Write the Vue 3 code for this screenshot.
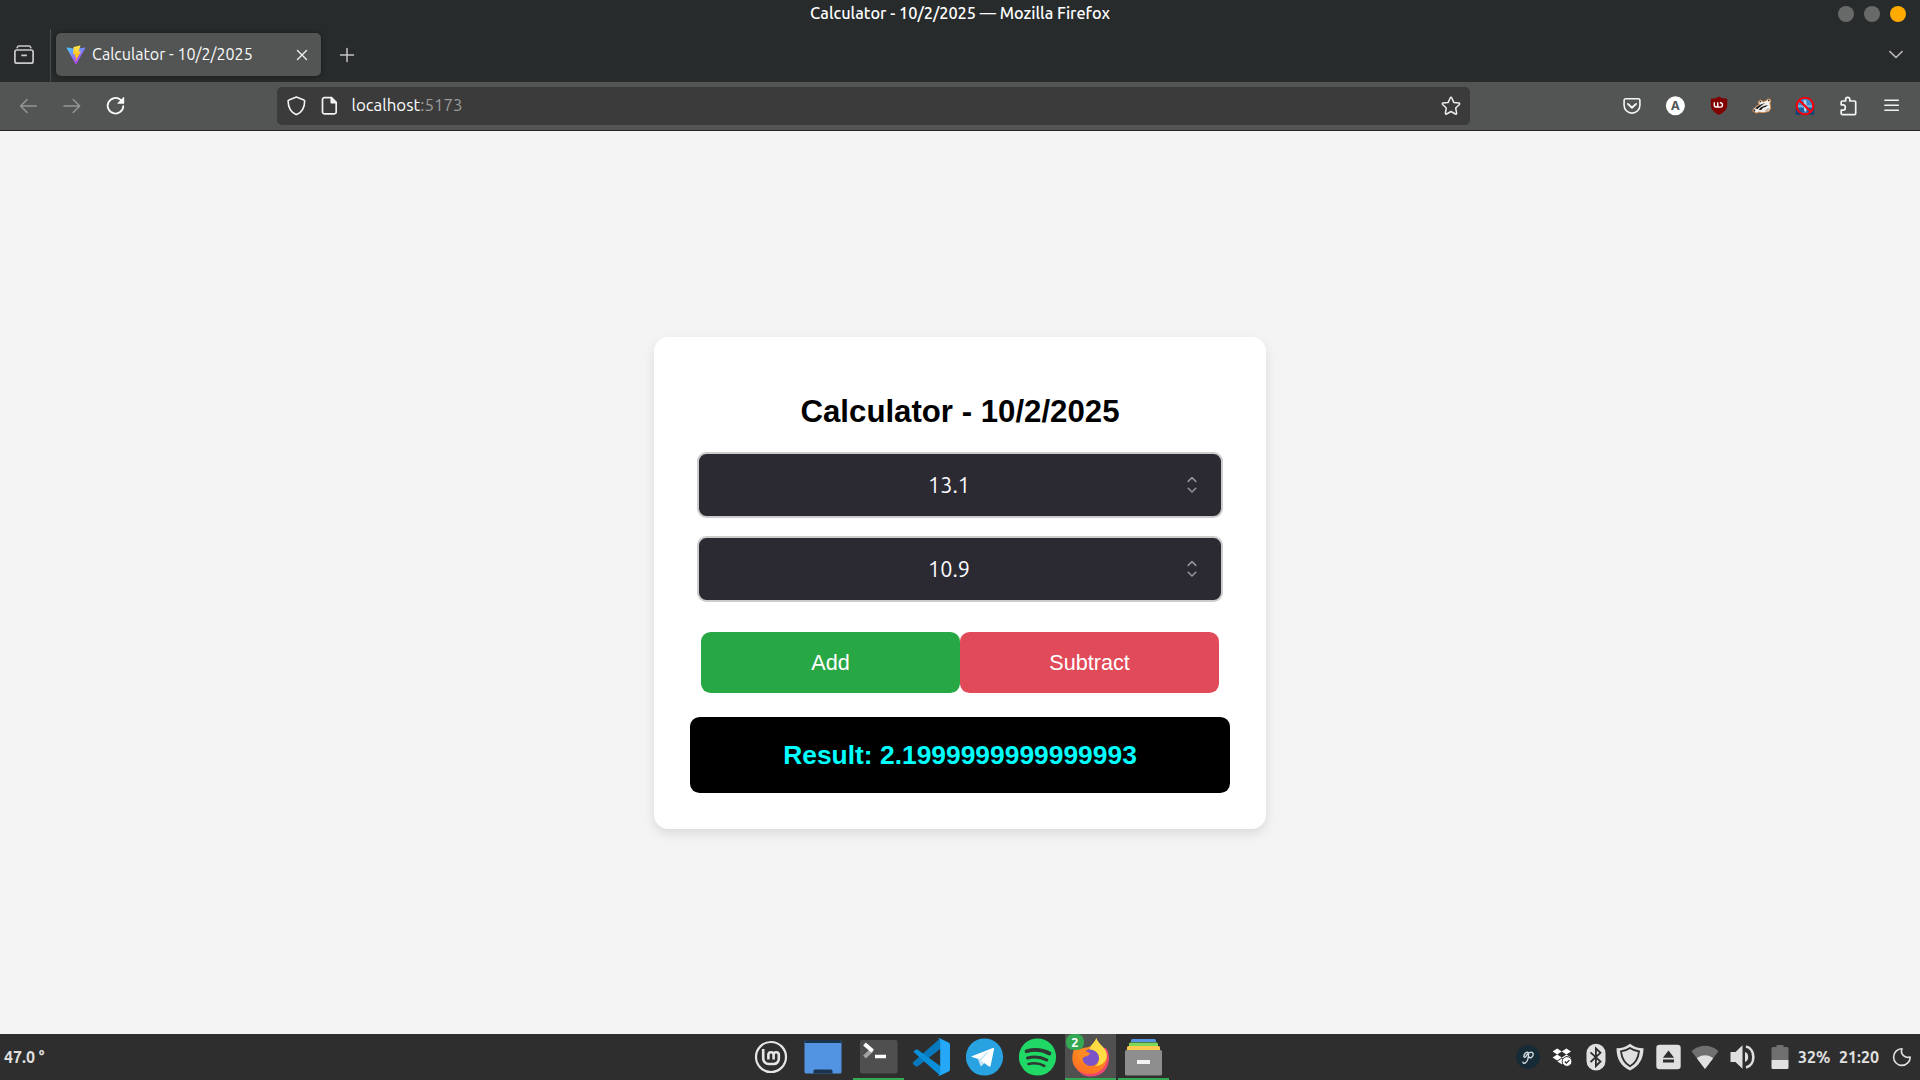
<script setup>
import { ref } from 'vue'

const title = 'Calculator - 10/2/2025'
const first = ref('13.1')
const second = ref('10.9')
const result = ref('2.1999999999999993')
</script>

<template>
  <div class="desktop">
    <header class="titlebar">
      <span class="window-title">{{ title }} — Mozilla Firefox</span>
      <div class="window-buttons"><i></i><i></i><i class="close"></i></div>
    </header>

    <div class="tabstrip">
      <svg class="view-icon" width="22" height="22" viewBox="0 0 22 22" fill="none" stroke="#c9caca" stroke-width="1.7" stroke-linecap="round">
        <path d="M4.2 3.6C4.5 2.4 5 2 6 2h10c1 0 1.500.4 1.800 1.600" />
        <rect x="1.900" y="6" width="18.200" height="13.200" rx="2" />
        <path d="M9 11.400h4.200" />
      </svg>
      <span class="divider"></span>
      <div class="tab">
        <svg width="20" height="20" viewBox="0 0 20 20">
          <defs>
            <linearGradient id="vite-a" x1="0" y1="0" x2=".6" y2="1"><stop offset="0" stop-color="#41d1ff" /><stop offset="1" stop-color="#bd34fe" /></linearGradient>
            <linearGradient id="vite-b" x1="0" y1="0" x2="0" y2="1"><stop offset="0" stop-color="#ffea50" /><stop offset="1" stop-color="#ffa800" /></linearGradient>
          </defs>
          <path fill="url(#vite-a)" d="M19.300 3.100 10.400 18.900a.5.5 0 0 1-.9 0L.6 3.100c-.2-.4.1-.8.600-.7l8.900 1.500 8.600-1.500c.5-.1.800.3.600.7Z" />
          <path fill="url(#vite-b)" d="m14.200.6-6.600 1.300-.5 7.200c0 .2.200.3.400.3l1.800-.4-.6 2.800c0 .2.200.4.400.3l1.100-.3-.8 4.100c0 .3.300.4.500.2l4.800-9.500c.1-.2-.1-.4-.3-.4l-1.900.4 1.900-5.600c0-.2 0-.4-.2-.4Z" />
        </svg>
        <span class="tab-title">{{ title }}</span>
        <svg width="12" height="12" viewBox="0 0 12 12" fill="none" stroke="#f0f0f0" stroke-width="1.400" stroke-linecap="round"><path d="m1.500 1.500 9 9m0-9-9 9" /></svg>
      </div>
      <svg class="new-tab" width="16" height="16" viewBox="0 0 16 16" fill="none" stroke="#c4c5c5" stroke-width="1.500" stroke-linecap="round"><path d="M8 1.500v13M1.500 8h13" /></svg>
      <svg class="all-tabs" width="16" height="10" viewBox="0 0 16 10" fill="none" stroke="#c0c1c1" stroke-width="1.500" stroke-linecap="round" stroke-linejoin="round"><path d="m1.800 1.500 6.200 6 6.200-6" /></svg>
    </div>

    <div class="toolbar">
      <div class="nav">
        <svg width="20" height="20" viewBox="0 0 20 20" fill="none" stroke="#949695" stroke-width="1.500" stroke-linecap="round" stroke-linejoin="round"><path d="M18.300 10H2.800M9.100 3.500 2.600 10l6.500 6.500" /></svg>
        <svg width="20" height="20" viewBox="0 0 20 20" fill="none" stroke="#949695" stroke-width="1.500" stroke-linecap="round" stroke-linejoin="round"><path d="M2 10h15.500M11.200 3.500l6.500 6.500-6.500 6.500" /></svg>
        <svg width="20" height="20" viewBox="0 0 20 20" fill="none" stroke="#fbfbfb" stroke-width="1.800" stroke-linecap="round"><path d="M17.300 10.200a7.800 7.800 0 1 1-2.600-6.300l1.500 1.500" /><path fill="#fbfbfb" stroke="none" d="M18.200 1.600v5.700c0 .3-.2.500-.5.500h-5.700c-.5 0-.7-.5-.4-.8L17.400 1.200c.3-.3.8-.1.800.4Z" /></svg>
      </div>
      <div class="urlbar">
        <svg width="20" height="20" viewBox="0 0 20 20" fill="none" stroke="#f4f4f4" stroke-width="1.600" stroke-linejoin="round"><path d="M10.400 1.100 2.900 3.900c-.6.2-.8.500-.8 1 .1 6.300 2.700 10.900 7.500 13.300.6.300 1 .3 1.600 0 4.800-2.400 7.400-7 7.500-13.300 0-.5-.2-.8-.8-1Z" /></svg>
        <svg class="page-icon" width="16" height="20" viewBox="0 0 16 20" fill="none" stroke="#f4f4f4" stroke-width="1.700" stroke-linejoin="round"><path d="M3.300 1.700h7l4.900 4.900V16a1.800 1.800 0 0 1-1.800 1.800H3.300A1.800 1.800 0 0 1 1.500 16V3.500a1.800 1.800 0 0 1 1.800-1.800Z" /><path fill="#f4f4f4" d="M10.300 1.700v4.900h4.900Z" /></svg>
        <span class="url">localhost<span class="port">:5173</span></span>
        <svg width="20" height="20" viewBox="0 0 20 20" fill="none" stroke="#ececec" stroke-width="1.500" stroke-linejoin="round"><path d="M9.300 1.800c.3-.6 1.100-.6 1.400 0l2.100 4.600 5.200.7c.7.1.9.9.400 1.400l-3.700 3.500.9 5.200c.1.700-.6 1.200-1.200.8L10 15.500 5.600 18c-.6.400-1.300-.1-1.200-.8l.9-5.200-3.700-3.500c-.5-.5-.3-1.300.4-1.400l5.200-.7Z" /></svg>
      </div>
      <div class="extensions">
        <svg width="20" height="20" viewBox="0 0 20 20" fill="none" stroke="#f6f6f6" stroke-width="1.600" stroke-linecap="round" stroke-linejoin="round"><path d="M3.800 2.800h12.400c1 0 1.700.7 1.700 1.700v4.700a7.900 7.900 0 0 1-15.800 0V4.500c0-1 .7-1.700 1.700-1.700Z" /><path stroke-width="1.900" d="m5.900 7.900 4.100 3.900 4.100-3.900" /></svg>
        <svg width="20" height="20" viewBox="0 0 20 20"><circle cx="10.400" cy="9.800" r="9.500" fill="#fff" /><text x="10.400" y="14.300" class="ext-a">A</text></svg>
        <svg width="20" height="20" viewBox="0 0 20 20"><path fill="#800000" d="M10 .5c2.300 1.600 5.100 2.200 8.200 2.200V9c0 4.400-3.200 7.400-8.200 10C5 16.400 1.800 13.400 1.800 9V2.700C4.900 2.700 7.700 2.100 10 .5Z" /><path d="M5.300 6.200v3.300c0 2 3.400 2 3.400 0V6.200m0 3.300c0 1.200.8 1.600 1.800 1.600h1.300a2.200 2.200 0 0 0 0-4.300h-.9" fill="none" stroke="#fff" stroke-width="1.400" /></svg>
        <svg width="20" height="20" viewBox="0 0 20 20" stroke-linejoin="round">
          <path d="M.8 15.200c-.2-2.200 3.400-5 6.600-6.700L6 6l2.500-2 2.800 1.700 3.500-1.300.8-1.400 2.500.2.700 2-.9 1.700.8 5.300-1.800 3.200-6.200 1.300-3.700-.6-2.600 1Z" fill="#f2f0ed" stroke="#dd8a45" stroke-width=".9" />
          <path d="M3 12.500c2.500-2.800 5.500-4.200 10.300-5.600-2.800 1.800-5 3.700-7.800 6Z" fill="#1a1a1a" />
          <path d="m6.500 13.800 2.500-2.500 4.200-1.800 2.900-.3-2.600 1.800-2.500.8-1.700 2.300Z" fill="#1a1a1a" />
          <circle cx="2.300" cy="14.600" r="1" fill="#1a1a1a" />
          <path d="m7.500 6 1.500-.6m7.300-1.400 1 1" stroke="#1a1a1a" stroke-width="1.300" />
          <path d="m12.300 14.300 4-2.300 1.300 1.400-2.300 1.600Z" fill="#b7b4b1" />
        </svg>
        <svg width="20" height="20" viewBox="0 0 20 20"><rect x=".8" y="9.600" width="18.400" height="9" fill="#07427f" /><circle cx="10" cy="10" r="8.500" fill="#3d8cc8" /><path d="M2.500 11.500h15v5h-15z" fill="#1c62a3" /><path d="M3 9.300h14v2H3z" fill="#7fb5da" /><path d="m8.800 4 2.500.5.300 10-1.500 2-1.100-2.500Z" fill="#b7d3e6" /><circle cx="10" cy="10" r="8.300" fill="none" stroke="#f60008" stroke-width="2.100" /><path d="m4.200 4.200 11.600 11.600" stroke="#f60008" stroke-width="2.200" /></svg>
        <svg width="20" height="20" viewBox="0 0 20 20" fill="none" stroke="#f4f4f4" stroke-width="1.700" stroke-linejoin="round"><path d="M3.200 8.300V6.200c0-.7.500-1.200 1.200-1.200h3.200V3.400a2.100 2.100 0 0 1 4.200 0V5h4.700c.7 0 1.200.5 1.200 1.200v11.200c0 .7-.5 1.200-1.200 1.200H4.400c-.7 0-1.200-.5-1.200-1.200v-3.200h2.100a1.900 1.900 0 0 0 1.900-1.900v-1.600a1.900 1.900 0 0 0-1.900-1.900H3.200Z" /></svg>
        <svg width="20" height="20" viewBox="0 0 20 20" fill="none" stroke="#f1f1f1" stroke-width="1.600" stroke-linecap="round"><path d="M2.900 4.300h13.400M2.900 9.300h13.400M2.900 14.300h13.400" /></svg>
      </div>
    </div>

    <main class="page">
      <section class="card">
        <h1>{{ title }}</h1>
        <div v-for="(value, i) in [first, second]" :key="i" class="field">
          <span>{{ value }}</span>
          <svg width="12" height="18" viewBox="0 0 12 18" fill="none" stroke="#96959c" stroke-width="1.500" stroke-linecap="round" stroke-linejoin="round"><path d="m2.200 5.400 3.800-3.800 3.800 3.800M2.200 12.200l3.800 3.800 3.800-3.800" /></svg>
        </div>
        <div class="actions">
          <button class="add">Add</button>
          <button class="subtract">Subtract</button>
        </div>
        <div class="result">Result: {{ result }}</div>
      </section>
    </main>

    <footer class="taskbar">
      <span class="temperature">47.0 °</span>
      <div class="apps">
        <div class="app mint">
          <svg width="34" height="34" viewBox="0 0 34 34" fill="none" stroke="#e6e6e6" stroke-linecap="round"><circle cx="17" cy="17" r="15" stroke-width="2.200" /><path stroke-width="2.600" stroke-linecap="butt" d="M9.200 9v9.500a5.500 5.500 0 0 0 5.500 5.500h5.100a5 5 0 0 0 5-5v-4.200a2.600 2.600 0 0 0-5.200 0v4.700m0-4.700a2.600 2.600 0 0 0-5.200 0v4.700" /></svg>
        </div>
        <div class="app files-desktop">
          <svg width="38" height="36" viewBox="0 0 38 36"><rect x=".5" y="1" width="37" height="33.500" rx="1.500" fill="#5294e2" /><path d="M.5 2.500A1.500 1.500 0 0 1 2 1h34a1.500 1.500 0 0 1 1.500 1.500V4H.5ZM9.500 34.500V32q0-1.500 1.500-1.500h16q1.500 0 1.500 1.500v2.500Z" fill="#1d344f" /></svg>
        </div>
        <div class="app running">
          <svg width="38" height="36" viewBox="0 0 38 36"><rect x="0" y="1" width="37.500" height="33.500" rx="2" fill="#4f4f4f" /><path d="m4.500 18 8-7.500" stroke="#a3a3a3" stroke-width="4" /><path d="m4.500 5 8 7" stroke="#fff" stroke-width="4" /><path d="M15 17.500h11" stroke="#fff" stroke-width="3.500" /></svg>
        </div>
        <div class="app">
          <svg width="38" height="38" viewBox=".5 0 38 38"><path fill="#0879bd" d="m27.500.5 9 4.200v7.500L27.700 11 5.300 28.200q-1.200.9-2.300 0L.8 26.200q-1-1 0-2.200Z" /><path fill="#0a8fd8" d="m.8 13.800 2.300-2q1-.8 2.200 0L27.700 28l8.800-1v6.300L27.500 37.500Z" /><path fill="#25a8f8" d="M27.500.5 36.300 4.700q1.200.6 1.200 1.900v24.800q0 1.300-1.200 1.900l-8.800 4.200q-1.500.5-2.500-.6 2.700 1 2.700-2V3.100q0-3-2.700-2 1-1.100 2.500-.6Z" /></svg>
        </div>
        <div class="app">
          <svg width="38" height="38" viewBox=".5 0 38 38"><circle cx="19" cy="19" r="18.600" fill="#29a2e2" /><path fill="#cbe5f4" d="m12 20 3.300 8.500 5-4.600Z" /><path fill="#fff" d="m6.300 18.200 21-8.200q1.500-.4 1.200 1.200L25.200 27.500q-.5 1.800-2 .8l-8.100-6 8-8.600-11 7-5.700-1.600q-1-.4-.1-.9Z" /><path fill="#edf7fc" d="m11.500 20.500 12-7.500-8 8.500Z" /></svg>
        </div>
        <div class="app">
          <svg width="38" height="38" viewBox=".5 0 38 38"><circle cx="19" cy="19" r="18.600" fill="#20d865" /><g fill="none" stroke="#2e3731" stroke-linecap="round"><path stroke-width="3.700" d="M8 13.300c7.700-2.200 16-1.500 23 2.200" /><path stroke-width="3" d="M9 20c6.500-1.800 13.500-1.100 19.300 2" /><path stroke-width="2.500" d="M10 26c5.300-1.300 11-.8 15.800 1.900" /></g></svg>
        </div>
        <div class="app running active">
          <svg width="38" height="40" viewBox=".5 0 38 40">
            <defs>
              <linearGradient id="fx" x1=".8" y1="0" x2=".3" y2="1"><stop offset="0" stop-color="#ffb02e" /><stop offset=".4" stop-color="#ff8a21" /><stop offset=".8" stop-color="#ff7a20" /><stop offset="1" stop-color="#ff6a2a" /></linearGradient>
            </defs>
            <path fill="#ef476f" d="M3 13C.5 29 7 39.500 19.500 39.500 31 39.500 38 31 37.500 20q0-5-3-9Z" />
            <path fill="url(#fx)" d="M5.500 8.500 9 12c3-2 8.500-1 11-3.500L21 7l4-4.500c1 6 9 9.500 10.300 17C36 28 29 37 18 37 7 37 .3 29 .8 20.500Q1 13 5.500 8.500Z" />
            <circle cx="19.300" cy="20.500" r="8.600" fill="#7b55c7" />
            <path fill="#ff8a21" d="M5 14q7-3 13.700 2.500-1.200 2.500-5 3c-2.700 1-3.700 3-2.300 6Q6 23 5 14Z" />
            <path fill="#ffdc43" d="M24.800.7C23.500 6 18 8 18.500 12.500c5.500.5 9.500 4 9 9.500-.3 3.500-1.800 6-4.100 7.500 9-1.300 12.500-7 11.800-13-.8-6-8.700-9.500-10.400-15.800Z" />
          </svg>
          <span class="badge">2</span>
        </div>
        <div class="app running">
          <svg width="38" height="38" viewBox=".5 0 38 38"><path fill="#5596e4" d="M6.500 4V2.500q0-1.500 1.500-1.500h22q1.500 0 1.500 1.500V4Z" /><path fill="#7ed85c" d="M4.500 8V6q0-1.500 1.500-1.500h26q1.500 0 1.500 1.500v2Z" /><path fill="#ffc94f" d="M2.500 12V9.500Q2.500 8 4 8h30q1.500 0 1.500 1.500V12Z" /><rect x=".5" y="12" width="37" height="25.500" rx="1.500" fill="#8e8e8e" /><rect x="12.500" y="22" width="13" height="4" fill="#f3f3f3" /></svg>
        </div>
      </div>

      <div class="tray">
        <svg width="24" height="26" viewBox="0 0 24 26"><circle cx="12" cy="13" r="12" fill="#172b37" /><path d="M7 18.300c.5 2.200 4.300.7 5-3.800.5-3 1.300-5.800-.2-6.300-1.600-.4-3.800 2-3.900 4-.1 1.600 1.500 1.200 2.300-.3 1.800-3.700 7-5 7-1.600 0 2.800-3 4.300-4.200 2.700" fill="none" stroke="#d2dbe0" stroke-width="1.400" stroke-linecap="round" /></svg>
        <svg class="dropbox" width="20" height="22" viewBox="0 0 20 22" fill="#fff"><path d="m5.200 2.500 4.600 3-4.600 3-4.600-3Zm9.200 0 4.600 3-4.600 3-4.600-3ZM5.200 8.500l4.600 3-4.600 3-4.600-3Zm9.200 0 4.600 3-4.600 3-4.600-3ZM9.800 12.500l4.300 2.900-4.300 2.900-4.400-2.900Z" /><circle cx="15" cy="15.500" r="4.900" stroke="#2e2e2e" /><path d="m12.800 15.500 1.600 1.600 2.900-3" fill="none" stroke="#2e2e2e" stroke-width="1.300" /></svg>
        <svg class="bluetooth" width="20" height="28" viewBox="0 0 20 28"><rect x=".5" y=".8" width="19" height="26.800" rx="9.500" fill="#e0e0e0" /><path d="m4.500 9.300 10 9.200-4.600 4.500V5.300l4.600 4.500-10 9.200" fill="none" stroke="#2e2e2e" stroke-width="1.800" /></svg>
        <svg class="guard" width="28" height="28" viewBox="0 0 28 28"><path fill="#e0e0e0" d="M14 .8c4 3 8 4.500 13.500 4.500C27.500 16 23 23.500 14 27.500 5 23.500.5 16 .5 5.300 6 5.300 10 3.800 14 .8Z" /><path d="M14 5c2.700 1.900 5.500 2.900 9 3.300-.8 7.200-3.700 12-9 15-5.300-3-8.200-7.800-9-15C8.500 7.900 11.300 6.900 14 5Z" fill="none" stroke="#2e2e2e" stroke-width="1.800" /></svg>
        <svg class="eject" width="25" height="26" viewBox="0 0 25 26"><rect x=".3" y=".8" width="24.400" height="24.400" rx="3.300" fill="#e0e0e0" /><path fill="#2e2e2e" d="m12.500 6.500 5.600 7.300H6.900ZM7 15.500h11v3H7Z" /></svg>
        <svg class="wifi" width="28" height="26" viewBox="0 0 28 26"><path fill="#707070" d="M14 25 .5 7.200C8-.2 20-.2 27.500 7.200Z" /><path fill="#e0e0e0" d="M14 25 5.800 14.200c4.700-4 11.700-4 16.400 0Z" /></svg>
        <svg class="volume" width="26" height="26" viewBox="0 0 26 26"><path fill="#e0e0e0" d="M.5 8h5l7-6.800v23.600l-7-6.800h-5ZM15 8c4.300 1 4.300 9 0 10Z" /><path d="M16 2.500c9.800 2.200 9.800 18.800 0 21" fill="none" stroke="#e0e0e0" stroke-width="2.600" /></svg>
        <svg class="battery" width="18" height="26" viewBox="0 0 18 26"><path fill="#707070" d="M5.500 1h7v2H16q1.500 0 1.500 1.500V16H.5V4.500Q.5 3 2 3h3.500Z" /><path fill="#e0e0e0" d="M.5 16h17v7.500q0 1.500-1.500 1.500H2Q.5 25 .5 23.500Z" /></svg>
        <span class="percent">32%</span>
        <span class="clock">21:20</span>
        <svg class="moon" width="20" height="20" viewBox="0 0 20 20" fill="none" stroke="#e0e0e0" stroke-width="1.600" stroke-linejoin="round"><path d="M10 1.800A8.300 8.300 0 1 0 18.200 10c-4.800 1.500-10.400-2.500-8.200-8.200Z" /></svg>
      </div>
    </footer>
  </div>
</template>

<style>
body {
  margin: 0;
  overflow: hidden;
}
</style>

<style scoped>
.desktop {
  width: 1920px;
  height: 1080px;
  display: flex;
  flex-direction: column;
  font-family: Ubuntu, "Noto Sans", sans-serif;
  background: #272b2c;
}
.desktop svg {
  display: block;
  flex: none;
}
.titlebar {
  position: relative;
  height: 28px;
  flex: none;
  display: flex;
  justify-content: center;
}
.window-title {
  color: #fff;
  font-size: 16.3px;
  font-weight: 500;
  line-height: 26px;
  white-space: nowrap;
}
.window-buttons {
  position: absolute;
  right: 14px;
  top: 6px;
  display: flex;
  gap: 10px;
}
.window-buttons i {
  width: 16px;
  height: 16px;
  border-radius: 50%;
  background: #686a6a;
}
.window-buttons .close {
  background: #ffaa00;
}
.tabstrip {
  height: 54px;
  flex: none;
  display: flex;
  align-items: center;
}
.view-icon {
  margin-left: 13px;
}
.divider {
  width: 1px;
  height: 53px;
  margin-left: 15px;
  background: #484c4d;
}
.tab {
  box-sizing: border-box;
  width: 265px;
  height: 43px;
  margin-left: 5px;
  margin-bottom: 1px;
  padding: 0 13px 0 10px;
  display: flex;
  align-items: center;
  border-radius: 5px;
  background: #525554;
  box-shadow: 0 0 4px rgba(0, 0, 0, 0.45);
}
.tab-title {
  flex: 1;
  margin-left: 6px;
  color: #fbfbfe;
  font-size: 16.1px;
  line-height: 20px;
  padding-bottom: 1px;
  white-space: nowrap;
}
.new-tab {
  margin-left: 18px;
}
.all-tabs {
  margin-left: auto;
  margin-right: 16px;
}
.toolbar {
  box-sizing: border-box;
  height: 49px;
  flex: none;
  display: flex;
  align-items: center;
  background: #525554;
  border-bottom: 1px solid #222626;
}
.nav {
  width: 277px;
  box-sizing: border-box;
  padding-left: 18px;
  display: flex;
  gap: 24px;
}
.urlbar {
  box-sizing: border-box;
  width: 1193px;
  height: 38px;
  padding: 0 9px 0 9px;
  display: flex;
  align-items: center;
  border-radius: 5px;
  background: #3a3b3a;
}
.page-icon {
  margin-left: 15px;
}
.url {
  flex: 1;
  margin-left: 14.5px;
  padding-bottom: 2px;
  color: #fbfbfe;
  font-size: 16.9px;
  line-height: 20px;
  white-space: nowrap;
}
.port {
  color: #9a9b9a;
}
.extensions {
  margin-left: 152px;
  display: flex;
  gap: 23.3px;
}
.ext-a {
  fill: #525554;
  font: bold 12.5px "Noto Sans", sans-serif;
  text-anchor: middle;
}
.page {
  height: 903px;
  flex: none;
  display: flex;
  justify-content: center;
  align-items: flex-start;
  background: #f4f4f4;
  font-family: "Liberation Sans", Arial, sans-serif;
}
.card {
  box-sizing: border-box;
  width: 612px;
  height: 492px;
  margin-top: 206px;
  padding: 57px 36px 36px;
  display: flex;
  flex-direction: column;
  align-items: center;
  background: #fff;
  border-radius: 14.4px;
  box-shadow: 0 5px 12px rgba(0, 0, 0, 0.1);
}
h1 {
  margin: 0 0 22px;
  height: 36px;
  line-height: 36px;
  font-size: 31.2px;
  color: #000;
}
.field {
  box-sizing: border-box;
  width: 526px;
  height: 66px;
  margin-bottom: 18px;
  padding: 0 23px 0 28px;
  display: flex;
  align-items: center;
  color: #fbfbfe;
  background: #2b2a33;
  border: 2px solid #ccc;
  border-radius: 9.6px;
  font-family: Ubuntu, "Noto Sans", sans-serif;
  font-size: 21.6px;
}
.field span {
  flex: 1;
  margin-right: 15px;
  text-align: center;
}
.actions {
  display: flex;
  width: 518px;
  margin-top: 12px;
}
button {
  flex: 1;
  height: 61px;
  padding: 0;
  border: 0;
  border-radius: 9.6px;
  color: #fff;
  font-family: inherit;
  font-size: 21.6px;
}
.add {
  background: #28a745;
}
.subtract {
  background: #e04a59;
}
.result {
  width: 540px;
  height: 76px;
  margin-top: 24px;
  line-height: 76px;
  text-align: center;
  font-size: 26.4px;
  font-weight: bold;
  color: #0ff;
  background: #000;
  border-radius: 9.6px;
}
.taskbar {
  height: 46px;
  flex: none;
  display: flex;
  align-items: center;
  background: #2e2e2e;
  color: #e0e0e0;
  font-weight: 700;
}
.temperature {
  width: 744px;
  box-sizing: border-box;
  padding: 0 0 1px 4px;
  font-size: 16px;
}
.apps {
  display: flex;
  gap: 2px;
}
.app {
  box-sizing: border-box;
  position: relative;
  width: 51px;
  height: 46px;
  display: flex;
  align-items: center;
  justify-content: center;
}
.mint {
  width: 54px;
}
.files-desktop {
  width: 45px;
  margin-right: 6px;
}
.running {
  border-bottom: 2px solid #35a854;
  padding-top: 1px;
}
.active {
  background: #505050;
}
.badge {
  position: absolute;
  left: 1px;
  top: 0;
  width: 18px;
  height: 16px;
  border-radius: 7px;
  background: #35a854;
  color: #fff;
  font-size: 13px;
  font-weight: bold;
  line-height: 16px;
  text-align: center;
}
.tray {
  margin-left: auto;
  margin-right: 8px;
  display: flex;
  align-items: center;
  font-size: 16px;
}
.dropbox { margin-left: 12px; }
.bluetooth { margin-left: 14px; }
.guard { margin-left: 10px; }
.eject { margin-left: 12px; }
.wifi { margin-left: 10px; }
.volume { margin-left: 11px; }
.battery { margin-left: 15px; }
.percent {
  width: 34px;
  margin-left: 9px;
}
.clock {
  width: 42px;
  margin-left: 7px;
}
.moon { margin-left: 11px; }
</style>
